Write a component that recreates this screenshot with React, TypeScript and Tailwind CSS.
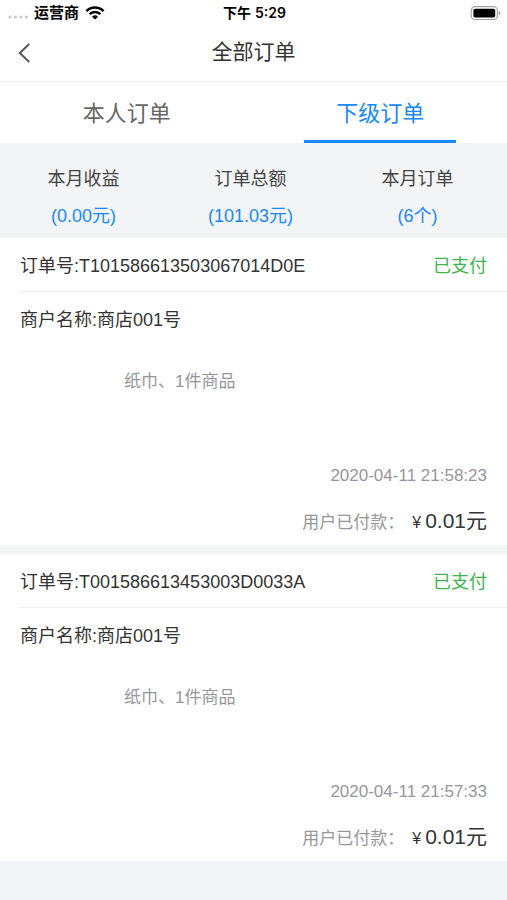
const stats = [
  { label: "本月收益", value: "(0.00元)" },
  { label: "订单总额", value: "(101.03元)" },
  { label: "本月订单", value: "(6个)" },
];

const orders = [
  {
    id: "T101586613503067014D0E",
    status: "已支付",
    shop: "商店001号",
    summary: "纸巾、1件商品",
    time: "2020-04-11 21:58:23",
    amount: "0.01元",
  },
  {
    id: "T001586613453003D0033A",
    status: "已支付",
    shop: "商店001号",
    summary: "纸巾、1件商品",
    time: "2020-04-11 21:57:33",
    amount: "0.01元",
  },
];

type Order = (typeof orders)[number];

function WifiIcon() {
  return (
    <svg className="h-3.5 w-5" viewBox="0 0 20 14" fill="none" stroke="#000">
      <path d="M1.4 5.1a12.2 12.2 0 0 1 17.2 0" strokeWidth="2.6" />
      <path d="M4.6 8.2a7.7 7.7 0 0 1 10.8 0" strokeWidth="2.4" />
      <path d="M10 13.6 7 10.7a4.4 4.4 0 0 1 6 0Z" fill="#000" stroke="none" />
    </svg>
  );
}

function BatteryIcon() {
  return (
    <svg className="h-4 w-8" viewBox="0 0 32 16" fill="none">
      <rect x="2.2" y="1.7" width="26.2" height="12.8" rx="3.8" stroke="#a3a3a3" strokeWidth="1.2" />
      <rect x="4.4" y="3.7" width="21.8" height="8.8" rx="1.8" fill="#000" />
      <path d="M29.8 6v4.4q1.6-.8 1.6-2.2T29.8 6Z" fill="#a3a3a3" />
    </svg>
  );
}

function StatusBar() {
  return (
    <div className="grid h-[26px] grid-cols-3 items-center pr-1.5 pl-2 text-sm font-semibold text-black">
      <div className="flex items-center gap-1.5">
        <svg className="mt-2 h-1 w-5" viewBox="0 0 20 4" fill="#c8c8c8">
          <circle cx="2" cy="2" r="1.6" />
          <circle cx="7.5" cy="2" r="1.6" />
          <circle cx="13" cy="2" r="1.6" />
          <circle cx="18.4" cy="2" r="1.6" />
        </svg>
        <span className="text-[15px]">运营商</span>
        <WifiIcon />
      </div>
      <div className="text-center">
        下午 <span className="font-[Inter]">5:29</span>
      </div>
      <div className="flex justify-end">
        <BatteryIcon />
      </div>
    </div>
  );
}

function OrderCard({ order }: { order: Order }) {
  return (
    <article className="bg-white text-lg text-[#333]">
      <div className="ml-5 flex h-[54px] items-center justify-between border-b border-[#eeeff1] pt-0.5 pr-5">
        <h2>订单号:{order.id}</h2>
        <span className="text-[#3cb54a]">{order.status}</span>
      </div>
      <p className="px-5 pt-3.5 leading-7">商户名称:{order.shop}</p>
      <p className="pt-9 pr-5 pl-[124px] text-[17px] leading-6 text-[#969799]">{order.summary}</p>
      <div className="flex flex-col items-end px-5 pt-[70px] pb-1.5 text-[17px] text-[#969799]">
        <time className="leading-6">{order.time}</time>
        <p className="flex items-baseline pt-[17px] leading-8">
          用户已付款：
          <span className="ml-2 text-[#333]">
            <span className="mr-1 text-base">¥</span>
            <span className="text-[21px]">{order.amount}</span>
          </span>
        </p>
      </div>
    </article>
  );
}

export default function App() {
  return (
    <div className="min-h-screen bg-[#f2f4f6] font-['Liberation_Sans','Noto_Sans_CJK_SC',sans-serif]">
      <header className="border-b border-[#ececec] bg-white">
        <StatusBar />
        <div className="grid h-[55px] grid-cols-[48px_1fr_48px] items-center pb-1">
          <button type="button" aria-label="返回" className="flex justify-center">
            <svg className="h-6 w-6" viewBox="0 0 24 24" fill="none" stroke="#555" strokeWidth="1.9">
              <path d="M17.2 4 7.8 13 17.2 22" />
            </svg>
          </button>
          <h1 className="text-center text-[21px] text-[#333]">全部订单</h1>
        </div>
      </header>
      <nav className="grid h-[61px] grid-cols-2 bg-white text-[22px]">
        <button type="button" className="flex flex-col items-center text-[#666]">
          <span className="flex flex-1 items-center pt-1">本人订单</span>
          <span className="h-[3px] w-3/5" />
        </button>
        <button type="button" className="flex flex-col items-center text-[#1989fa]">
          <span className="flex flex-1 items-center pt-1">下级订单</span>
          <span className="h-[3px] w-3/5 bg-[#1989fa]" />
        </button>
      </nav>
      <dl className="grid grid-cols-3 pt-[22px] pr-1.5 pb-2 text-center text-lg">
        {stats.map((stat) => (
          <div key={stat.label} className="flex flex-col gap-[9px]">
            <dt className="text-[#444]">{stat.label}</dt>
            <dd className="text-[#1989fa]">{stat.value}</dd>
          </div>
        ))}
      </dl>
      <main className="flex flex-col gap-[9px]">
        {orders.map((order) => (
          <OrderCard key={order.id} order={order} />
        ))}
      </main>
    </div>
  );
}
